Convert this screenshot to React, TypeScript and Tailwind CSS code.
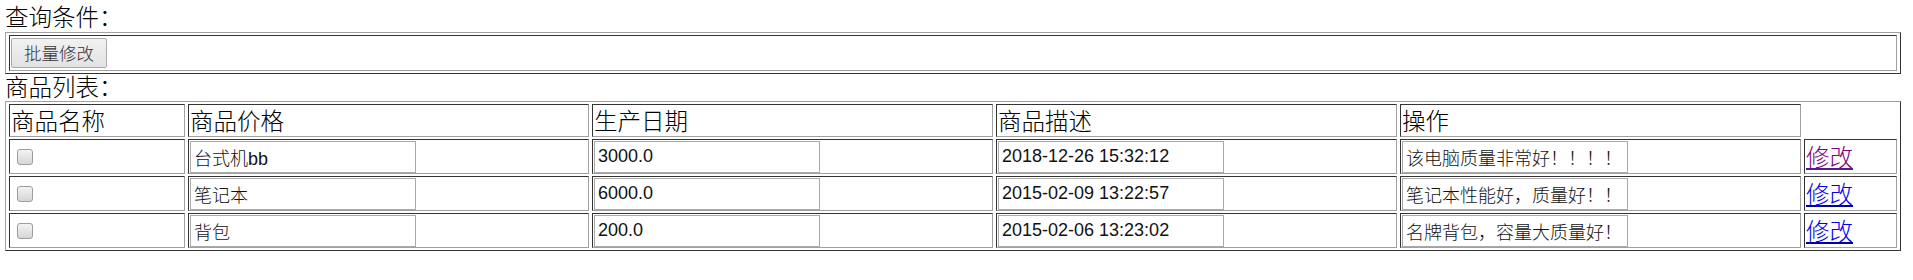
const CJK = "font-['Noto_Sans_CJK_SC',sans-serif] font-light";
const INPUT_FONT = "font-['Liberation_Sans','Noto_Sans_CJK_SC',sans-serif] font-light";

// classic border="1" look: outset table, inset cells
const TABLE =
  'border-separate border-spacing-x-[3px] border-spacing-y-[2px] table-fixed w-[1896px] border border-t-[#a0a0a0] border-l-[#a0a0a0] border-r-[#333] border-b-[#333]';
const CELL = 'border border-t-[#333] border-l-[#333] border-r-[#a0a0a0] border-b-[#a0a0a0]';

interface Product {
  name: string;
  price: string;
  date: string;
  desc: string;
  visited?: boolean;
}

const products: Product[] = [
  { name: '台式机bb', price: '3000.0', date: '2018-12-26 15:32:12', desc: '该电脑质量非常好！！！！', visited: true },
  { name: '笔记本', price: '6000.0', date: '2015-02-09 13:22:57', desc: '笔记本性能好，质量好！！' },
  { name: '背包', price: '200.0', date: '2015-02-06 13:23:02', desc: '名牌背包，容量大质量好！' },
];

const TextBox = ({ value }: { value: string }) => (
  <input
    type="text"
    defaultValue={value}
    className={`block w-[226px] h-[32px] border border-[#a9a9a9] bg-white px-[3px] text-[18px] text-[#111] outline-none ${INPUT_FONT}`}
  />
);

const TD = ({ children }: { children?: React.ReactNode }) => (
  <td className={`${CELL} h-[35px] px-[1px] py-0 align-middle`}>{children}</td>
);

const TH = ({ children }: { children: React.ReactNode }) => (
  <th className={`${CELL} h-[33px] p-[1px] align-middle text-left font-light text-[23.5px] leading-[27px]`}>
    {children}
  </th>
);

export default function App() {
  return (
    <div className={`min-h-[280px] bg-white pl-[5px] text-black ${CJK}`}>
      <div className="h-[32px] text-[23.5px] leading-[32px]">查询条件：</div>
      <table className={TABLE}>
        <tbody>
          <tr>
            <td className={`${CELL} h-[36px] p-[1px] align-middle`}>
              <button
                type="button"
                className="block w-[96px] h-[30px] rounded-[2px] border border-[#acacac] bg-gradient-to-b from-[#f2f2f2] to-[#e2e2e2] text-[17.5px] leading-[28px] text-[#333]"
              >
                批量修改
              </button>
            </td>
          </tr>
        </tbody>
      </table>
      <div className="h-[27px] text-[23.5px] leading-[25px]">商品列表：</div>
      <table className={TABLE}>
        <colgroup>
          <col className="w-[176px]" />
          <col className="w-[401px]" />
          <col className="w-[401px]" />
          <col className="w-[401px]" />
          <col className="w-[401px]" />
          <col className="w-[93px]" />
        </colgroup>
        <tbody>
          <tr>
            <TH>商品名称</TH>
            <TH>商品价格</TH>
            <TH>生产日期</TH>
            <TH>商品描述</TH>
            <TH>操作</TH>
          </tr>
          {products.map((p) => (
            <tr key={p.name}>
              <TD>
                <input
                  type="checkbox"
                  className="block ml-[6px] w-[16px] h-[16px] appearance-none rounded-[3px] border border-[#9c9c9c] bg-gradient-to-b from-[#f3f3f3] to-[#d6d6d6]"
                />
              </TD>
              <TD>
                <TextBox value={p.name} />
              </TD>
              <TD>
                <TextBox value={p.price} />
              </TD>
              <TD>
                <TextBox value={p.date} />
              </TD>
              <TD>
                <TextBox value={p.desc} />
              </TD>
              <TD>
                <a
                  href="#"
                  className={`text-[23.5px] leading-[27px] underline ${
                    p.visited ? 'text-[#800080] decoration-[#551a8b]' : 'text-[#0000ee] decoration-[#0000aa]'
                  }`}
                >
                  修改
                </a>
              </TD>
            </tr>
          ))}
        </tbody>
      </table>
    </div>
  );
}
